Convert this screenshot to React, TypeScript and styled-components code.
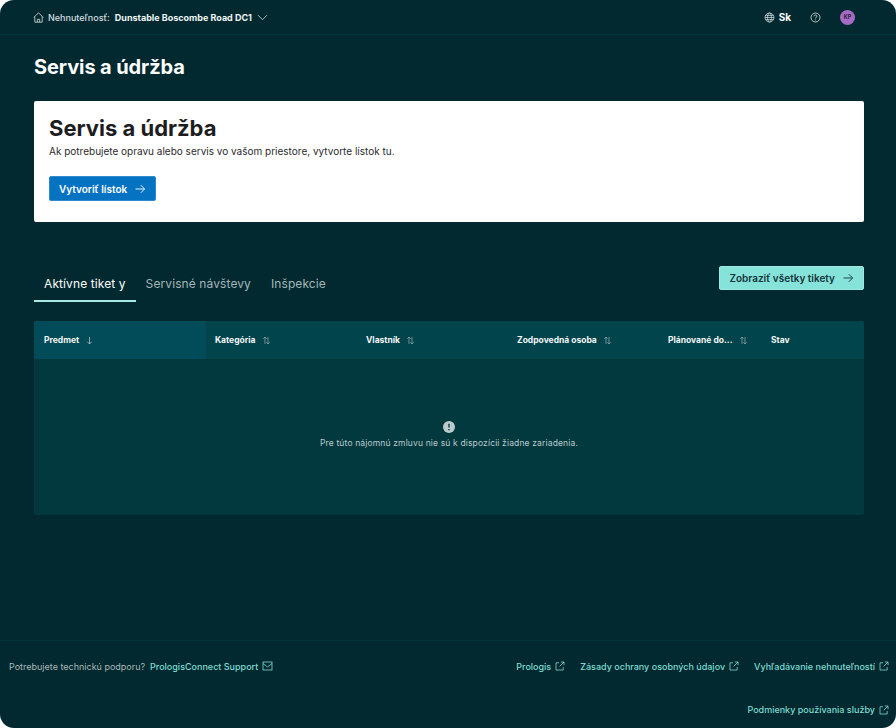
import React from "react";
import styled, { createGlobalStyle } from "styled-components";

const Global = createGlobalStyle`
  html, body { margin: 0; padding: 0; background: #ffffff; }
  body { font-family: Inter, "Noto Sans", sans-serif; }
  * { box-sizing: border-box; }
`;

const Frame = styled.div`
  width: 896px;
  height: 728px;
  background: #01292f;
  border-radius: 14px;
  overflow: hidden;
  display: flex;
  flex-direction: column;
`;

const TopBar = styled.header`
  height: 35px;
  flex: none;
  padding: 0 41px 0 33px;
  display: flex;
  align-items: center;
  justify-content: space-between;
  border-bottom: 1px solid #04343b;
`;

const Group = styled.div`
  display: flex;
  align-items: center;
`;

const PropLabel = styled.span`
  font-size: 9px;
  font-weight: 500;
  color: #d5dfe0;
  margin-left: 4px;
`;

const PropValue = styled.span`
  font-size: 9px;
  font-weight: 700;
  color: #f0f4f4;
  margin-left: 5px;
`;

const Lang = styled.span`
  font-size: 10px;
  font-weight: 700;
  color: #ffffff;
  margin-left: 4px;
  margin-right: 19px;
`;

const Avatar = styled.div`
  width: 15px;
  height: 15px;
  border-radius: 50%;
  background: #a66cc4;
  color: #2c1c3c;
  font-size: 5.5px;
  font-weight: 700;
  display: flex;
  align-items: center;
  justify-content: center;
  margin-left: 19px;
`;

const Main = styled.main`
  flex: 1;
  padding: 0 32px 0 34px;
`;

const PageTitle = styled.h1`
  margin: 20px 0 0;
  font-size: 20px;
  line-height: 24px;
  font-weight: 700;
  color: #ffffff;
  letter-spacing: -0.1px;
`;

const Card = styled.section`
  margin-top: 22px;
  height: 121px;
  background: #ffffff;
  border-radius: 2px;
  padding: 14px 15px;
`;

const CardTitle = styled.h2`
  margin: 0;
  font-size: 22px;
  line-height: 26px;
  font-weight: 700;
  color: #1d1d1f;
`;

const CardText = styled.p`
  margin: 3px 0 0;
  font-size: 10px;
  line-height: 14px;
  color: #2b2b2e;
`;

const Button = styled.button<{ $tone: "blue" | "mint" }>`
  display: inline-flex;
  align-items: center;
  gap: 7px;
  height: ${(p) => (p.$tone === "blue" ? "25px" : "24px")};
  padding: 0 ${(p) => (p.$tone === "blue" ? "9px" : "9px")};
  border-radius: 2px;
  font-family: inherit;
  font-size: 10px;
  font-weight: 600;
  border: 1px solid ${(p) => (p.$tone === "blue" ? "#2f8ad0" : "#9ee8df")};
  background: ${(p) => (p.$tone === "blue" ? "#0572c2" : "#86e3da")};
  color: ${(p) => (p.$tone === "blue" ? "#ffffff" : "#14343a")};
`;

const CardButton = styled(Button)`
  margin-top: 18px;
`;

const TabRow = styled.div`
  margin-top: 44px;
  height: 36px;
  display: flex;
  justify-content: space-between;
  align-items: flex-start;
`;

const Tabs = styled.div`
  display: flex;
`;

const Tab = styled.div<{ $active?: boolean }>`
  height: 36px;
  padding: 0 10px;
  display: flex;
  align-items: center;
  font-size: 12px;
  color: ${(p) => (p.$active ? "#ffffff" : "#a4b6b9")};
  border-bottom: 2px solid ${(p) => (p.$active ? "#a5ebe2" : "transparent")};
  letter-spacing: 0.1px;
`;

const Table = styled.div`
  margin-top: 19px;
  height: 194px;
  background: #01393f;
  border-radius: 2px;
  overflow: hidden;
`;

const HeadRow = styled.div`
  height: 38px;
  background: #01444c;
  display: grid;
  grid-template-columns: 172px 151px 151px 151px 103px 102px;
`;

const HeadCell = styled.div<{ $sorted?: boolean }>`
  display: flex;
  align-items: center;
  gap: 6px;
  padding-left: ${(p) => (p.$sorted ? "10px" : "9px")};
  font-size: 8.5px;
  font-weight: 700;
  color: #f2f6f6;
  background: ${(p) => (p.$sorted ? "#014c58" : "transparent")};
  white-space: nowrap;
`;

const Empty = styled.div`
  height: 156px;
  padding-top: 62px;
  display: flex;
  flex-direction: column;
  align-items: center;
  gap: 5px;
  font-size: 8.5px;
  color: #bccacc;
  letter-spacing: 0.15px;
`;

const Footer = styled.footer`
  flex: none;
  height: 88px;
  border-top: 1px solid #04343b;
  padding: 0 7px 0 9px;
  display: flex;
  justify-content: space-between;
`;

const Support = styled.div`
  display: flex;
  align-items: center;
  height: 50px;
  font-size: 9px;
  color: #a9b8ba;
`;

const Mint = styled.span`
  color: #7fdcd2;
  font-weight: 500;
  display: inline-flex;
  align-items: center;
  gap: 4px;
  font-size: 9px;
`;

const SupportLink = styled(Mint)`
  margin-left: 5px;
`;

const FooterLinks = styled.div`
  display: flex;
  flex-wrap: wrap;
  justify-content: flex-end;
  width: 380px;
  column-gap: 15px;
`;

const FooterLink = styled(Mint)`
  height: 50px;
  margin-bottom: -13px;
`;

const Arrow = () => (
  <svg width="12" height="12" viewBox="0 0 12 12" fill="none" stroke="currentColor" strokeWidth="0.9">
    <path d="M1.5 6h9M6.8 2.2 10.6 6 6.8 9.8" />
  </svg>
);

const Sort = () => (
  <svg width="9" height="9" viewBox="0 0 9 9" fill="none" stroke="#8aa5a8" strokeWidth="0.8">
    <path d="M3 8V1M1.3 2.7 3 1l1.7 1.7M6 1v7M4.3 6.3 6 8l1.7-1.7" />
  </svg>
);

const Down = () => (
  <svg width="9" height="9" viewBox="0 0 9 9" fill="none" stroke="#a9bec1" strokeWidth="0.8">
    <path d="M4.5 1v7M2.2 5.7 4.5 8l2.3-2.3" />
  </svg>
);

const External = () => (
  <svg width="10" height="10" viewBox="0 0 10 10" fill="none" stroke="currentColor" strokeWidth="0.8">
    <path d="M4 1.8H1v7.2h7.2V6M5.8 1h3.2v3.2M9 1 4.6 5.4" />
  </svg>
);

const heads = ["Kategória", "Vlastník", "Zodpovedná osoba", "Plánované do..."];

export default function App() {
  return (
    <Frame>
      <Global />
      <TopBar>
        <Group>
          <svg width="11" height="11" viewBox="0 0 11 11" fill="none" stroke="#d5dfe0" strokeWidth="0.8">
            <path d="M.7 5.6 5.5.8l4.8 4.8M1.8 4.6v5.6h7.4V4.6M4.3 10.2V7.3h2.4v2.9" />
          </svg>
          <PropLabel>Nehnuteľnosť:</PropLabel>
          <PropValue>Dunstable Boscombe Road DC1</PropValue>
          <svg width="11" height="11" viewBox="0 0 11 11" fill="none" stroke="#d5dfe0" strokeWidth="0.8" style={{ marginLeft: 5 }}>
            <path d="M1 3.2 5.5 7.7 10 3.2" />
          </svg>
        </Group>
        <Group>
          <svg width="11" height="11" viewBox="0 0 11 11" fill="none" stroke="#e0e8e8" strokeWidth="0.7">
            <circle cx="5.5" cy="5.5" r="4.5" />
            <ellipse cx="5.5" cy="5.5" rx="2" ry="4.5" />
            <path d="M1 5.5h9M1.6 3.4h7.8M1.6 7.6h7.8" />
          </svg>
          <Lang>Sk</Lang>
          <svg width="11" height="11" viewBox="0 0 11 11" fill="none" stroke="#e0e8e8" strokeWidth="0.8">
            <circle cx="5.5" cy="5.5" r="4.5" />
            <path d="M4.1 4.3c0-1.9 2.8-1.8 2.8-.1 0 1.1-1.4 1.1-1.4 2.3" />
            <path d="M5.5 7.6v.8" />
          </svg>
          <Avatar>KP</Avatar>
        </Group>
      </TopBar>
      <Main>
        <PageTitle>Servis a údržba</PageTitle>
        <Card>
          <CardTitle>Servis a údržba</CardTitle>
          <CardText>Ak potrebujete opravu alebo servis vo vašom priestore, vytvorte lístok tu.</CardText>
          <CardButton $tone="blue">
            Vytvoriť lístok <Arrow />
          </CardButton>
        </Card>
        <TabRow>
          <Tabs>
            <Tab $active>Aktívne tiket y</Tab>
            <Tab>Servisné návštevy</Tab>
            <Tab>Inšpekcie</Tab>
          </Tabs>
          <Button $tone="mint">
            Zobraziť všetky tikety <Arrow />
          </Button>
        </TabRow>
        <Table>
          <HeadRow>
            <HeadCell $sorted>
              Predmet <Down />
            </HeadCell>
            {heads.map((h) => (
              <HeadCell key={h}>
                {h} <Sort />
              </HeadCell>
            ))}
            <HeadCell>Stav</HeadCell>
          </HeadRow>
          <Empty>
            <svg width="12" height="12" viewBox="0 0 12 12">
              <circle cx="6" cy="6" r="6" fill="#bccacc" />
              <path d="M6 2.8v3.8M6 8v1.2" stroke="#01393f" strokeWidth="1.4" />
            </svg>
            Pre túto nájomnú zmluvu nie sú k dispozícii žiadne zariadenia.
          </Empty>
        </Table>
      </Main>
      <Footer>
        <Support>
          Potrebujete technickú podporu?
          <SupportLink>
            PrologisConnect Support
            <svg width="11" height="10" viewBox="0 0 11 10" fill="none" stroke="currentColor" strokeWidth="0.8">
              <rect x="1" y="1" width="9" height="8" />
              <path d="M1 2.5 5.5 6 10 2.5" />
            </svg>
          </SupportLink>
        </Support>
        <FooterLinks>
          <FooterLink>Prologis <External /></FooterLink>
          <FooterLink>Zásady ochrany osobných údajov <External /></FooterLink>
          <FooterLink>Vyhľadávanie nehnuteľností <External /></FooterLink>
          <FooterLink>Podmienky používania služby <External /></FooterLink>
        </FooterLinks>
      </Footer>
    </Frame>
  );
}
